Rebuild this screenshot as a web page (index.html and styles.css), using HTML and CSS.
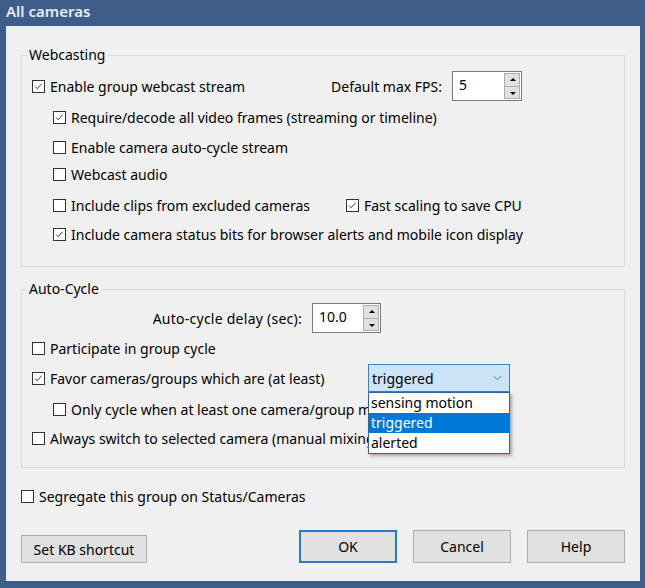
FILE: index.html
```html
<!DOCTYPE html>
<html>
<head>
<meta charset="utf-8">
<link rel="stylesheet" href="styles.css">
</head>
<body>
<div class="titlebar">All cameras</div>
<div class="client">
  <fieldset class="group g1">
    <legend>Webcasting</legend>
    <div class="row r1">
      <span class="cb on"><svg viewBox="0 0 13 13"><polyline points="2.5,6.5 5,9.2 10.2,3.2"/></svg></span>Enable group webcast stream
      <div class="fps">
        <span class="lbl">Default max FPS:</span>
        <div class="spin"><span class="spin-val">5</span><span class="spin-btns"><span class="sb up"></span><span class="sb down"></span></span></div>
      </div>
    </div>
    <div class="row indent r2"><span class="cb on"><svg viewBox="0 0 13 13"><polyline points="2.5,6.5 5,9.2 10.2,3.2"/></svg></span>Require/decode all video frames (streaming or timeline)</div>
    <div class="row indent r3"><span class="cb"></span>Enable camera auto-cycle stream</div>
    <div class="row indent r4"><span class="cb"></span>Webcast audio</div>
    <div class="row indent r5">
      <span class="half"><span class="cb"></span>Include clips from excluded cameras</span>
      <span class="cb on"><svg viewBox="0 0 13 13"><polyline points="2.5,6.5 5,9.2 10.2,3.2"/></svg></span>Fast scaling to save CPU
    </div>
    <div class="row indent r6"><span class="cb on"><svg viewBox="0 0 13 13"><polyline points="2.5,6.5 5,9.2 10.2,3.2"/></svg></span>Include camera status bits for browser alerts and mobile icon display</div>
  </fieldset>

  <fieldset class="group g2">
    <legend>Auto-Cycle</legend>
    <div class="row a1">
      <span class="delay-lbl">Auto-cycle delay (sec):</span>
      <div class="spin spin2"><span class="spin-val">10.0</span><span class="spin-btns"><span class="sb up"></span><span class="sb down"></span></span></div>
    </div>
    <div class="row a2"><span class="cb"></span>Participate in group cycle</div>
    <div class="row a3">
      <span class="favor"><span class="cb on"><svg viewBox="0 0 13 13"><polyline points="2.5,6.5 5,9.2 10.2,3.2"/></svg></span>Favor cameras/groups which are (at least)</span>
      <div class="combo-wrap">
        <div class="combo"><span>triggered</span><svg class="chev" viewBox="0 0 10 6"><polyline points="1,1 5,5 9,1"/></svg></div>
        <ul class="droplist">
          <li>sensing motion</li>
          <li class="sel">triggered</li>
          <li>alerted</li>
        </ul>
      </div>
    </div>
    <div class="row indent a4"><span class="cb"></span>Only cycle when at least one camera/group meets this</div>
    <div class="row a5"><span class="cb"></span>Always switch to selected camera (manual mixing)</div>
  </fieldset>

  <div class="row seg"><span class="cb"></span>Segregate this group on Status/Cameras</div>

  <div class="buttons">
    <button class="btn kb">Set KB shortcut</button>
    <div class="right-btns">
      <button class="btn big ok">OK</button>
      <button class="btn big">Cancel</button>
      <button class="btn big">Help</button>
    </div>
  </div>
</div>
</body>
</html>
```

FILE: styles.css
```css
html, body {
  margin: 0;
  padding: 0;
}
body {
  background: #3e5e89;
  font-family: "Noto Sans", "Open Sans", sans-serif;
  font-size: 14px;
  color: #000;
  width: 645px;
  height: 588px;
  overflow: hidden;
}
.titlebar {
  height: 26px;
  line-height: 22px;
  padding-left: 6px;
  color: #e6ecf4;
  font-weight: 600;
  font-size: 15px;
}
.client {
  margin: 0 5px 0 6px;
  height: 555px;
  background: #f0f0f0;
  padding: 19px 15px 0 15px;
  box-sizing: border-box;
}
.group {
  margin: 0;
  border: 1px solid #dcdcdc;
  padding: 0 10px 0 10px;
  min-width: 0;
}
legend {
  padding: 0 2px;
  margin-left: -5px;
  line-height: 20px;
}
.g1 { padding-bottom: 17px; }
.g2 { margin-top: 12px; padding-bottom: 14px; }

.row {
  display: flex;
  align-items: center;
  height: 30px;
  white-space: nowrap;
}
.indent { padding-left: 21px; }

.r1 { margin-top: 6px; }
.r2 { margin-top: 1px; }
.r3 { margin-top: 0; }
.r4 { margin-top: -3px; }
.r5 { margin-top: 1px; }
.r6 { margin-top: -1px; }

.a1 { margin-top: 4px; }
.a4 { margin-top: 1px; }
.a5 { margin-top: -1px; }
.seg { margin-top: 13px; }

.cb {
  flex: none;
  width: 13px;
  height: 13px;
  border: 1px solid #333;
  box-sizing: border-box;
  background: #fff;
  margin-right: 5px;
  display: inline-block;
}
.cb svg {
  display: block;
  width: 11px;
  height: 11px;
}
.cb svg polyline {
  fill: none;
  stroke: #333;
  stroke-width: 1.1;
}
.half {
  display: flex;
  align-items: center;
  width: 293px;
}

.fps {
  margin-left: auto;
  margin-right: 92px;
  display: flex;
  align-items: center;
}
.fps .lbl { margin-right: 10px; }

.spin {
  display: flex;
  width: 70px;
  height: 30px;
  border: 1px solid #7a7a7a;
  background: #fff;
  box-sizing: border-box;
}
.spin2 { width: 69px; }
.spin-val {
  flex: 1;
  padding-left: 6px;
  line-height: 26px;
}
.spin-btns {
  width: 17px;
  display: flex;
  flex-direction: column;
  padding: 1px 1px 1px 0;
  box-sizing: border-box;
}
.sb {
  flex: 1;
  background: #e1e1e1;
  border: 1px solid #adadad;
  position: relative;
}
.sb.up { border-bottom: none; }
.sb::after {
  content: "";
  position: absolute;
  left: 5px;
  top: 4px;
  border-left: 3px solid transparent;
  border-right: 3px solid transparent;
}
.sb.up::after { border-bottom: 3px solid #000; }
.sb.down::after { border-top: 3px solid #000; top: 5px; }

.delay-lbl {
  width: 270px;
  text-align: right;
  margin-right: 10px;
  letter-spacing: 0.25px;
}

.favor {
  display: flex;
  align-items: center;
  width: 336px;
}
.combo-wrap {
  position: relative;
}
.combo {
  width: 142px;
  height: 28px;
  box-sizing: border-box;
  border: 1px solid #3d7ec0;
  background: #cce4f7;
  display: flex;
  align-items: center;
  padding-left: 3px;
}
.combo span { flex: 1; }
.chev {
  width: 9px;
  height: 6px;
  margin-right: 7px;
}
.chev polyline {
  fill: none;
  stroke: #666;
  stroke-width: 1;
}
.droplist {
  position: absolute;
  left: 0;
  top: 28px;
  width: 142px;
  margin: 0;
  padding: 0;
  list-style: none;
  background: #fff;
  border: 1px solid #2d6aa5;
  box-sizing: border-box;
  box-shadow: 2px 2px 3px rgba(0, 0, 0, 0.3);
  z-index: 2;
}
.droplist li {
  height: 20px;
  line-height: 19px;
  padding-left: 2px;
}
.droplist li.sel {
  background: #0078d7;
  color: #fff;
}

.buttons {
  margin-top: 19px;
  display: flex;
  align-items: flex-end;
}
.btn {
  font-family: inherit;
  font-size: 14px;
  color: #000;
  background: #e1e1e1;
  border: 1px solid #adadad;
  padding: 0;
  box-sizing: border-box;
}
.kb {
  width: 126px;
  height: 28px;
}
.right-btns {
  margin-left: auto;
  display: flex;
  gap: 16px;
}
.big {
  width: 98px;
  height: 33px;
}
.ok {
  border: 2px solid #2a79c4;
}
```
